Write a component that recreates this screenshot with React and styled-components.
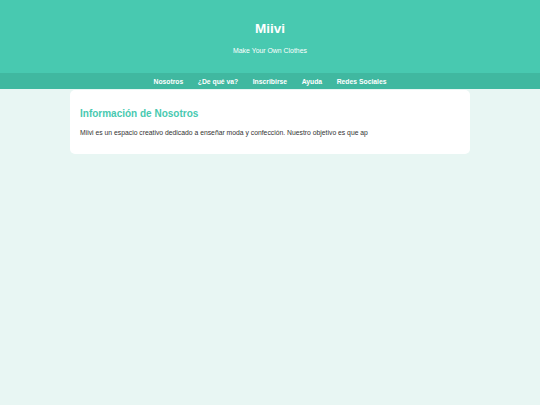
import React from "react";
import styled, { createGlobalStyle } from "styled-components";

const GlobalStyle = createGlobalStyle`
  html, body {
    margin: 0;
    padding: 0;
    background: #e8f6f3;
    font-family: "Liberation Sans", Arial, sans-serif;
  }
`;

const Header = styled.header`
  background: #48c9b0;
  height: 73px;
  box-sizing: border-box;
  padding-top: 20px;
  text-align: center;
  color: #fff;
`;

const Title = styled.h1`
  margin: 0;
  font-size: 13.5px;
  line-height: 18px;
  font-weight: 700;
`;

const Subtitle = styled.p`
  margin: 8px 0 0;
  font-size: 6.9px;
  line-height: 9px;
`;

const Nav = styled.nav`
  background: #40b8a0;
  height: 16px;
  display: flex;
  justify-content: center;
  align-items: center;
  gap: 14.5px;
`;

const NavLink = styled.a`
  color: #fff;
  font-size: 6.8px;
  font-weight: 700;
  text-decoration: none;
  cursor: pointer;
`;

const Main = styled.main`
  width: 400px;
  margin: 1px auto 0;
`;

const Card = styled.section`
  background: #fff;
  border-radius: 5px;
  padding: 17px 10px 16px;
`;

const CardTitle = styled.h2`
  margin: 0;
  color: #48c9b0;
  font-size: 10px;
  line-height: 13px;
  font-weight: 700;
`;

const CardText = styled.p`
  margin: 8px 0 0;
  color: #333;
  font-size: 6.8px;
  line-height: 10px;
  white-space: nowrap;
`;

const links = ["Nosotros", "¿De qué va?", "Inscribirse", "Ayuda", "Redes Sociales"];

export default function App() {
  return (
    <>
      <GlobalStyle />
      <Header>
        <Title>Miivi</Title>
        <Subtitle>Make Your Own Clothes</Subtitle>
      </Header>
      <Nav>
        {links.map((l) => (
          <NavLink key={l}>{l}</NavLink>
        ))}
      </Nav>
      <Main>
        <Card>
          <CardTitle>Información de Nosotros</CardTitle>
          <CardText>
            Miivi es un espacio creativo dedicado a enseñar moda y confección. Nuestro objetivo es que ap
          </CardText>
        </Card>
      </Main>
    </>
  );
}
